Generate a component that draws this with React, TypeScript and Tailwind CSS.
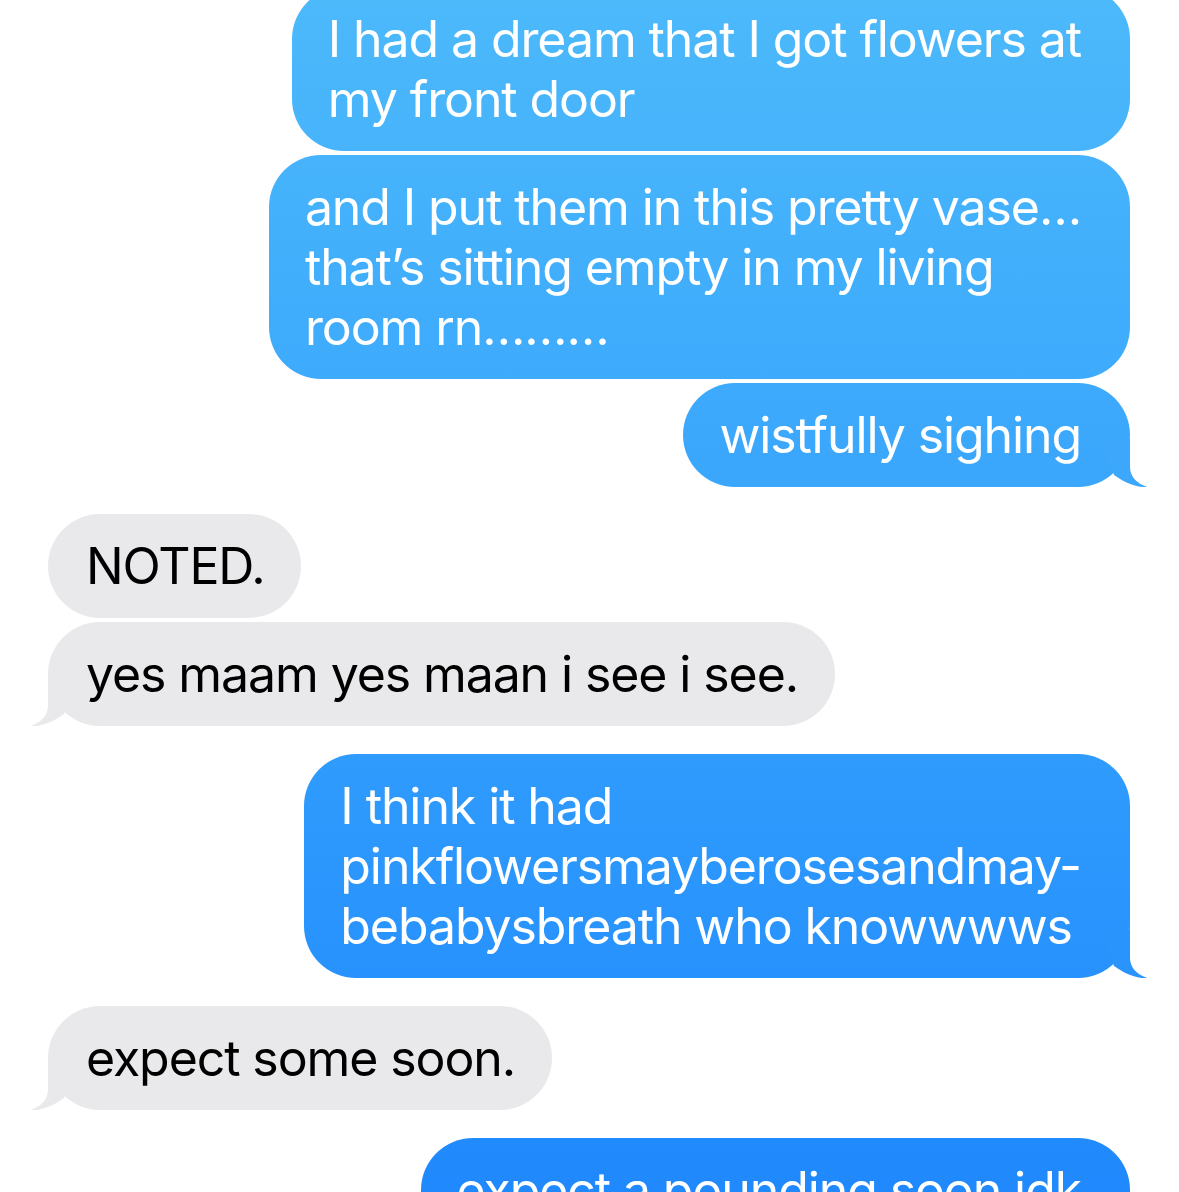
import React from 'react'

type Msg = {
  me: boolean
  lines: string[]
  tail?: boolean
  tailColor?: string
  mt: string
}

const messages: Msg[] = [
  { me: true, lines: ['I had a dream that I got flowers at', 'my front door'], mt: 'mt-[-13px]' },
  {
    me: true,
    lines: ['and I put them in this pretty vase…', 'that’s sitting empty in my living', 'room rn………'],
    mt: 'mt-[4px]',
  },
  { me: true, lines: ['wistfully sighing'], tail: true, tailColor: '#3da8fb', mt: 'mt-[4px]' },
  { me: false, lines: ['NOTED.'], mt: 'mt-[27px]' },
  { me: false, lines: ['yes maam yes maan i see i see.'], tail: true, mt: 'mt-[4px]' },
  {
    me: true,
    lines: ['I think it had', 'pinkflowersmayberosesandmay-', 'bebabysbreath who knowwwws'],
    tail: true,
    tailColor: '#2994fc',
    mt: 'mt-[28px]',
  },
  { me: false, lines: ['expect some soon.'], tail: true, mt: 'mt-[28px]' },
  { me: true, lines: ['expect a pounding soon idk'], mt: 'mt-[28px]' },
]

const Tail = ({ color, left }: { color: string; left: boolean }) => (
  <svg
    width="48"
    height="48"
    viewBox="0 0 48 48"
    className={left ? 'absolute bottom-0 left-[-18px] -scale-x-100' : 'absolute bottom-0 right-[-18px]'}
  >
    <path d="M30 0 L30 28 C30 37 36 44 47 48 C37 48.5 27 45 14 36 L0 0 Z" fill={color} />
  </svg>
)

const Bubble = ({ msg }: { msg: Msg }) => {
  const base = 'relative rounded-[52px] py-[22px] text-[50px] leading-[60px] tracking-[-1.1px] whitespace-nowrap'
  const look = msg.me
    ? 'self-end pl-[36px] pr-[49px] text-white bg-linear-to-b from-[#4cb9fb] to-[#1f89fd] bg-fixed'
    : 'self-start pl-[38px] pr-[37px] text-black bg-[#e9e9eb]'
  return (
    <div className={`${base} ${look} ${msg.mt}`}>
      {msg.lines.map((l, i) => (
        <div key={i} className="relative z-10">{l}</div>
      ))}
      {msg.tail && <Tail color={msg.me ? msg.tailColor || '#2f9afc' : '#e9e9eb'} left={!msg.me} />}
    </div>
  )
}

export default function App() {
  return (
    <div className="w-[1179px] h-[1192px] overflow-hidden bg-white font-['Inter',sans-serif]">
      <div className="flex flex-col pl-[48px] pr-[49px]">
        {messages.map((m, i) => (
          <Bubble key={i} msg={m} />
        ))}
      </div>
    </div>
  )
}
